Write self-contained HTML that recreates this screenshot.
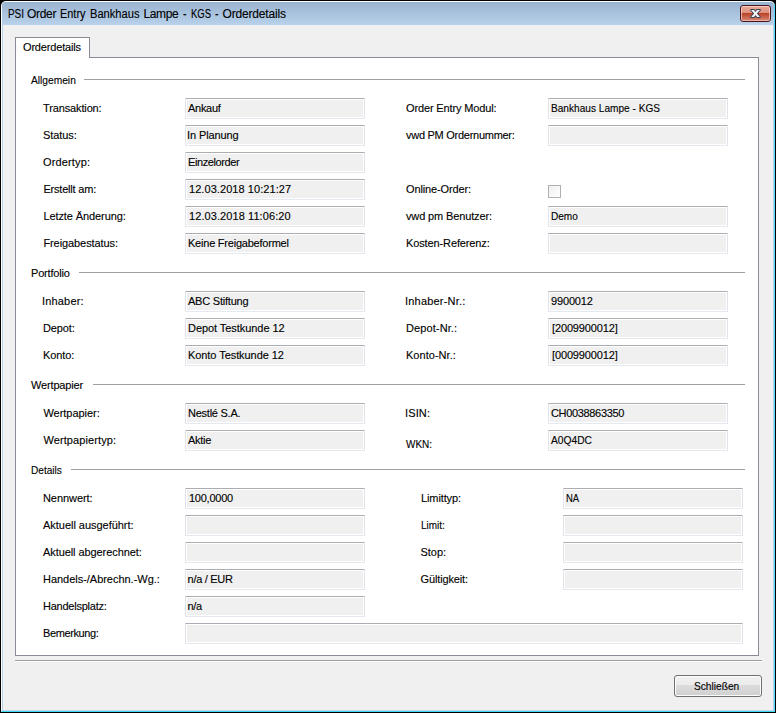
<!DOCTYPE html>
<html><head><meta charset="utf-8"><title>Orderdetails</title>
<style>
html,body{margin:0;padding:0}
body{width:776px;height:713px;background:#000;overflow:hidden;position:relative;font-family:"Liberation Sans",sans-serif;font-size:11px;color:#000}
div{position:absolute;box-sizing:content-box}
#wh{left:1px;top:1px;width:774px;height:711px;background:#fff;border-radius:5px 5px 0 0}
#cy{left:1px;top:711px;width:774px;height:1px;background:#3ddcf5}
#cyr{left:774px;top:4px;width:1px;height:708px;background:#55d6ff}
#fr{left:2px;top:2px;width:772px;height:709px;background:#b9d1ea;border-radius:4px 4px 0 0}
#tb{left:2px;top:2px;width:772px;height:23px;background:linear-gradient(#99b4d1,#b9d1ea);border-radius:4px 4px 0 0}
#ct{left:3px;top:25px;width:770px;height:685px;background:#f0f0f0}
#bl{left:3px;top:710px;width:770px;height:1px;background:#c5d3ea}
#cl{left:740px;top:5px;width:29px;height:15px;border:1px solid #45141c;border-radius:3px;background:linear-gradient(#f9cfc4 0,#f9cfc4 1px,#e8a594 1px,#dd917f 7px,#b93f22 7px,#d37f6b 14px,#eeb3a4 14px,#eeb3a4 15px);box-shadow:inset 1px 0 0 rgba(255,215,205,.7),inset -1px 0 0 rgba(255,215,205,.7)}
#pn{left:15px;top:57px;width:742px;height:597px;border:1px solid #898c95;background:#fff}
#tab{left:15px;top:37px;width:73px;height:20px;border:1px solid #898c95;border-bottom:none;background:#fff}
.t{line-height:13px;white-space:nowrap;transform-origin:0 0;-webkit-text-stroke:0.12px #000}
.ti{font-size:12px;line-height:16px}
.f{height:19px;border:1px solid #e2e3ea;border-top-color:#abadb3;border-bottom-color:#e3e9ef;background:#f0f0f0;border-radius:1px;box-shadow:inset 0 0 0 1px #fff}
.hl{height:1px;background:#a0a0a0}
.cb{width:11px;height:11px;border:1px solid #b1b1b1;background:linear-gradient(135deg,#f0f0f0,#fff)}
#sep{left:15px;top:660px;width:747px;height:1px;background:#a0a0a0}
#sep2{left:15px;top:661px;width:747px;height:1px;background:#fff}
#btn{left:674px;top:675px;width:86px;height:20px;border:1px solid #707070;border-radius:3px;background:linear-gradient(#f2f2f2 0,#ebebeb 9px,#dddddd 9px,#cfcfcf 20px);box-shadow:inset 0 0 0 1px #fcfcfc}
</style></head><body>
<div id="wh"></div><div id="cy"></div><div id="cyr"></div><div id="fr"></div><div id="tb"></div><div id="ct"></div><div id="bl"></div>
<div id="cl"><svg width="29" height="15" viewBox="0 0 29 15" style="position:absolute;left:0;top:0"><path d="M9.500 4L10 3.500L13.200 3.500L14.500 5.300L15.800 3.500L19 3.500L19.500 4L16.500 7.500L19.500 11L19 11.500L15.800 11.500L14.500 9.700L13.200 11.500L10 11.500L9.500 11L12.500 7.500Z" fill="#f8f8f8" stroke="#3a4353" stroke-width="1.05" stroke-linejoin="round"/></svg></div>
<div id="pn"></div><div id="tab"></div>
<div class="hl" style="left:84px;top:79px;width:661px"></div>
<div class="hl" style="left:79px;top:272px;width:666px"></div>
<div class="hl" style="left:93px;top:384px;width:652px"></div>
<div class="hl" style="left:71px;top:469px;width:674px"></div>
<div class="f" style="left:185px;top:98px;width:178px"></div>
<div class="f" style="left:185px;top:125px;width:178px"></div>
<div class="f" style="left:185px;top:152px;width:178px"></div>
<div class="f" style="left:185px;top:179px;width:178px"></div>
<div class="f" style="left:185px;top:206px;width:178px"></div>
<div class="f" style="left:185px;top:233px;width:178px"></div>
<div class="f" style="left:548px;top:98px;width:178px"></div>
<div class="f" style="left:548px;top:125px;width:178px"></div>
<div class="cb" style="left:548px;top:185px"></div>
<div class="f" style="left:548px;top:206px;width:178px"></div>
<div class="f" style="left:548px;top:233px;width:178px"></div>
<div class="f" style="left:185px;top:291px;width:178px"></div>
<div class="f" style="left:185px;top:318px;width:178px"></div>
<div class="f" style="left:185px;top:345px;width:178px"></div>
<div class="f" style="left:548px;top:291px;width:178px"></div>
<div class="f" style="left:548px;top:318px;width:178px"></div>
<div class="f" style="left:548px;top:345px;width:178px"></div>
<div class="f" style="left:185px;top:403px;width:178px"></div>
<div class="f" style="left:185px;top:430px;width:178px"></div>
<div class="f" style="left:548px;top:403px;width:178px"></div>
<div class="f" style="left:548px;top:430px;width:178px"></div>
<div class="f" style="left:185px;top:488px;width:178px"></div>
<div class="f" style="left:185px;top:515px;width:178px"></div>
<div class="f" style="left:185px;top:542px;width:178px"></div>
<div class="f" style="left:185px;top:569px;width:178px"></div>
<div class="f" style="left:185px;top:596px;width:178px"></div>
<div class="f" style="left:185px;top:623px;width:556px"></div>
<div class="f" style="left:563px;top:488px;width:178px"></div>
<div class="f" style="left:563px;top:515px;width:178px"></div>
<div class="f" style="left:563px;top:542px;width:178px"></div>
<div class="f" style="left:563px;top:569px;width:178px"></div>
<div id="sep"></div><div id="sep2"></div>
<div id="btn"></div>
<div class="t ti" style="left:7.50px;top:6px;transform:scaleX(0.8260)">PSI</div>
<div class="t ti" style="left:27.00px;top:6px;letter-spacing:-0.319px">Order</div>
<div class="t ti" style="left:59.50px;top:6px;transform:scaleX(0.9105)">Entry</div>
<div class="t ti" style="left:90.00px;top:6px;transform:scaleX(0.9274)">Bankhaus</div>
<div class="t ti" style="left:143.40px;top:6px;letter-spacing:-0.354px">Lampe</div>
<div class="t ti" style="left:182.80px;top:6px;transform:scaleX(0.8750)">-</div>
<div class="t ti" style="left:190.50px;top:6px;transform:scaleX(0.7933)">KGS</div>
<div class="t ti" style="left:215.30px;top:6px;transform:scaleX(0.8750)">-</div>
<div class="t ti" style="left:222.50px;top:6px;letter-spacing:-0.169px">Orderdetails</div>
<div class="t" style="left:23.00px;top:41px;letter-spacing:-0.174px">Orderdetails</div>
<div class="t" style="left:694.40px;top:680px;transform:scaleX(0.9242)">Schließen</div>
<div class="t" style="left:30.60px;top:74px;transform:scaleX(0.9277)">Allgemein</div>
<div class="t" style="left:31.00px;top:267px;letter-spacing:-0.186px">Portfolio</div>
<div class="t" style="left:31.00px;top:379px;letter-spacing:-0.159px">Wertpapier</div>
<div class="t" style="left:31.00px;top:464px;transform:scaleX(0.9158)">Details</div>
<div class="t" style="left:43.00px;top:102px;letter-spacing:-0.133px">Transaktion:</div>
<div class="t" style="left:188.00px;top:102px;letter-spacing:-0.288px">Ankauf</div>
<div class="t" style="left:43.00px;top:129px;letter-spacing:-0.072px">Status:</div>
<div class="t" style="left:187.00px;top:129px;letter-spacing:-0.109px">In Planung</div>
<div class="t" style="left:43.00px;top:156px;letter-spacing:0.151px">Ordertyp:</div>
<div class="t" style="left:188.00px;top:156px;letter-spacing:-0.398px">Einzelorder</div>
<div class="t" style="left:43.40px;top:183px;letter-spacing:-0.191px">Erstellt am:</div>
<div class="t" style="left:189.00px;top:183px;letter-spacing:0.066px">12.03.2018 10:21:27</div>
<div class="t" style="left:43.40px;top:210px;letter-spacing:-0.092px">Letzte Änderung:</div>
<div class="t" style="left:189.00px;top:210px;letter-spacing:0.084px">12.03.2018 11:06:20</div>
<div class="t" style="left:43.40px;top:237px;letter-spacing:-0.083px">Freigabestatus:</div>
<div class="t" style="left:188.00px;top:237px;letter-spacing:-0.222px">Keine Freigabeformel</div>
<div class="t" style="left:406.00px;top:102px;letter-spacing:-0.139px">Order Entry Modul:</div>
<div class="t" style="left:550.50px;top:102px;transform:scaleX(0.9194)">Bankhaus Lampe - KGS</div>
<div class="t" style="left:406.00px;top:129px;letter-spacing:-0.271px">vwd PM Ordernummer:</div>
<div class="t" style="left:406.00px;top:183px;letter-spacing:-0.131px">Online-Order:</div>
<div class="t" style="left:406.00px;top:210px;letter-spacing:-0.132px">vwd pm Benutzer:</div>
<div class="t" style="left:550.50px;top:210px;transform:scaleX(0.9136)">Demo</div>
<div class="t" style="left:406.00px;top:237px;letter-spacing:-0.120px">Kosten-Referenz:</div>
<div class="t" style="left:42.00px;top:295px;letter-spacing:0.170px">Inhaber:</div>
<div class="t" style="left:188.00px;top:295px;letter-spacing:-0.214px">ABC Stiftung</div>
<div class="t" style="left:43.00px;top:322px;letter-spacing:-0.121px">Depot:</div>
<div class="t" style="left:188.00px;top:322px;letter-spacing:-0.058px">Depot Testkunde 12</div>
<div class="t" style="left:43.00px;top:349px;letter-spacing:-0.099px">Konto:</div>
<div class="t" style="left:188.00px;top:349px;letter-spacing:-0.066px">Konto Testkunde 12</div>
<div class="t" style="left:405.00px;top:295px;letter-spacing:0.202px">Inhaber-Nr.:</div>
<div class="t" style="left:551.00px;top:295px;letter-spacing:-0.159px">9900012</div>
<div class="t" style="left:406.00px;top:322px;letter-spacing:0.103px">Depot-Nr.:</div>
<div class="t" style="left:552.00px;top:322px;letter-spacing:-0.135px">[2009900012]</div>
<div class="t" style="left:406.00px;top:349px;letter-spacing:0.032px">Konto-Nr.:</div>
<div class="t" style="left:552.00px;top:349px;letter-spacing:-0.135px">[0009900012]</div>
<div class="t" style="left:43.40px;top:407px;letter-spacing:-0.025px">Wertpapier:</div>
<div class="t" style="left:188.00px;top:407px;letter-spacing:-0.247px">Nestlé S.A.</div>
<div class="t" style="left:43.40px;top:434px;letter-spacing:0.102px">Wertpapiertyp:</div>
<div class="t" style="left:188.00px;top:434px;letter-spacing:-0.272px">Aktie</div>
<div class="t" style="left:405.00px;top:407px;letter-spacing:0.127px">ISIN:</div>
<div class="t" style="left:551.00px;top:407px;letter-spacing:-0.336px">CH0038863350</div>
<div class="t" style="left:406.00px;top:438px;transform:scaleX(0.9071)">WKN:</div>
<div class="t" style="left:550.50px;top:434px;transform:scaleX(0.9303)">A0Q4DC</div>
<div class="t" style="left:43.00px;top:492px;letter-spacing:-0.072px">Nennwert:</div>
<div class="t" style="left:189.00px;top:492px;letter-spacing:-0.252px">100,0000</div>
<div class="t" style="left:43.00px;top:519px;letter-spacing:-0.031px">Aktuell ausgeführt:</div>
<div class="t" style="left:43.00px;top:546px;letter-spacing:-0.078px">Aktuell abgerechnet:</div>
<div class="t" style="left:43.00px;top:573px;letter-spacing:-0.027px">Handels-/Abrechn.-Wg.:</div>
<div class="t" style="left:187.60px;top:573px;letter-spacing:-0.293px">n/a / EUR</div>
<div class="t" style="left:43.00px;top:600px;letter-spacing:-0.237px">Handelsplatz:</div>
<div class="t" style="left:187.60px;top:600px;letter-spacing:-0.387px">n/a</div>
<div class="t" style="left:43.00px;top:627px;letter-spacing:-0.389px">Bemerkung:</div>
<div class="t" style="left:421.00px;top:492px;letter-spacing:-0.112px">Limittyp:</div>
<div class="t" style="left:565.50px;top:492px;transform:scaleX(0.8624)">NA</div>
<div class="t" style="left:421.00px;top:519px;transform:scaleX(0.9056)">Limit:</div>
<div class="t" style="left:420.60px;top:546px;letter-spacing:-0.057px">Stop:</div>
<div class="t" style="left:420.60px;top:573px;letter-spacing:-0.145px">Gültigkeit:</div>
</body></html>
